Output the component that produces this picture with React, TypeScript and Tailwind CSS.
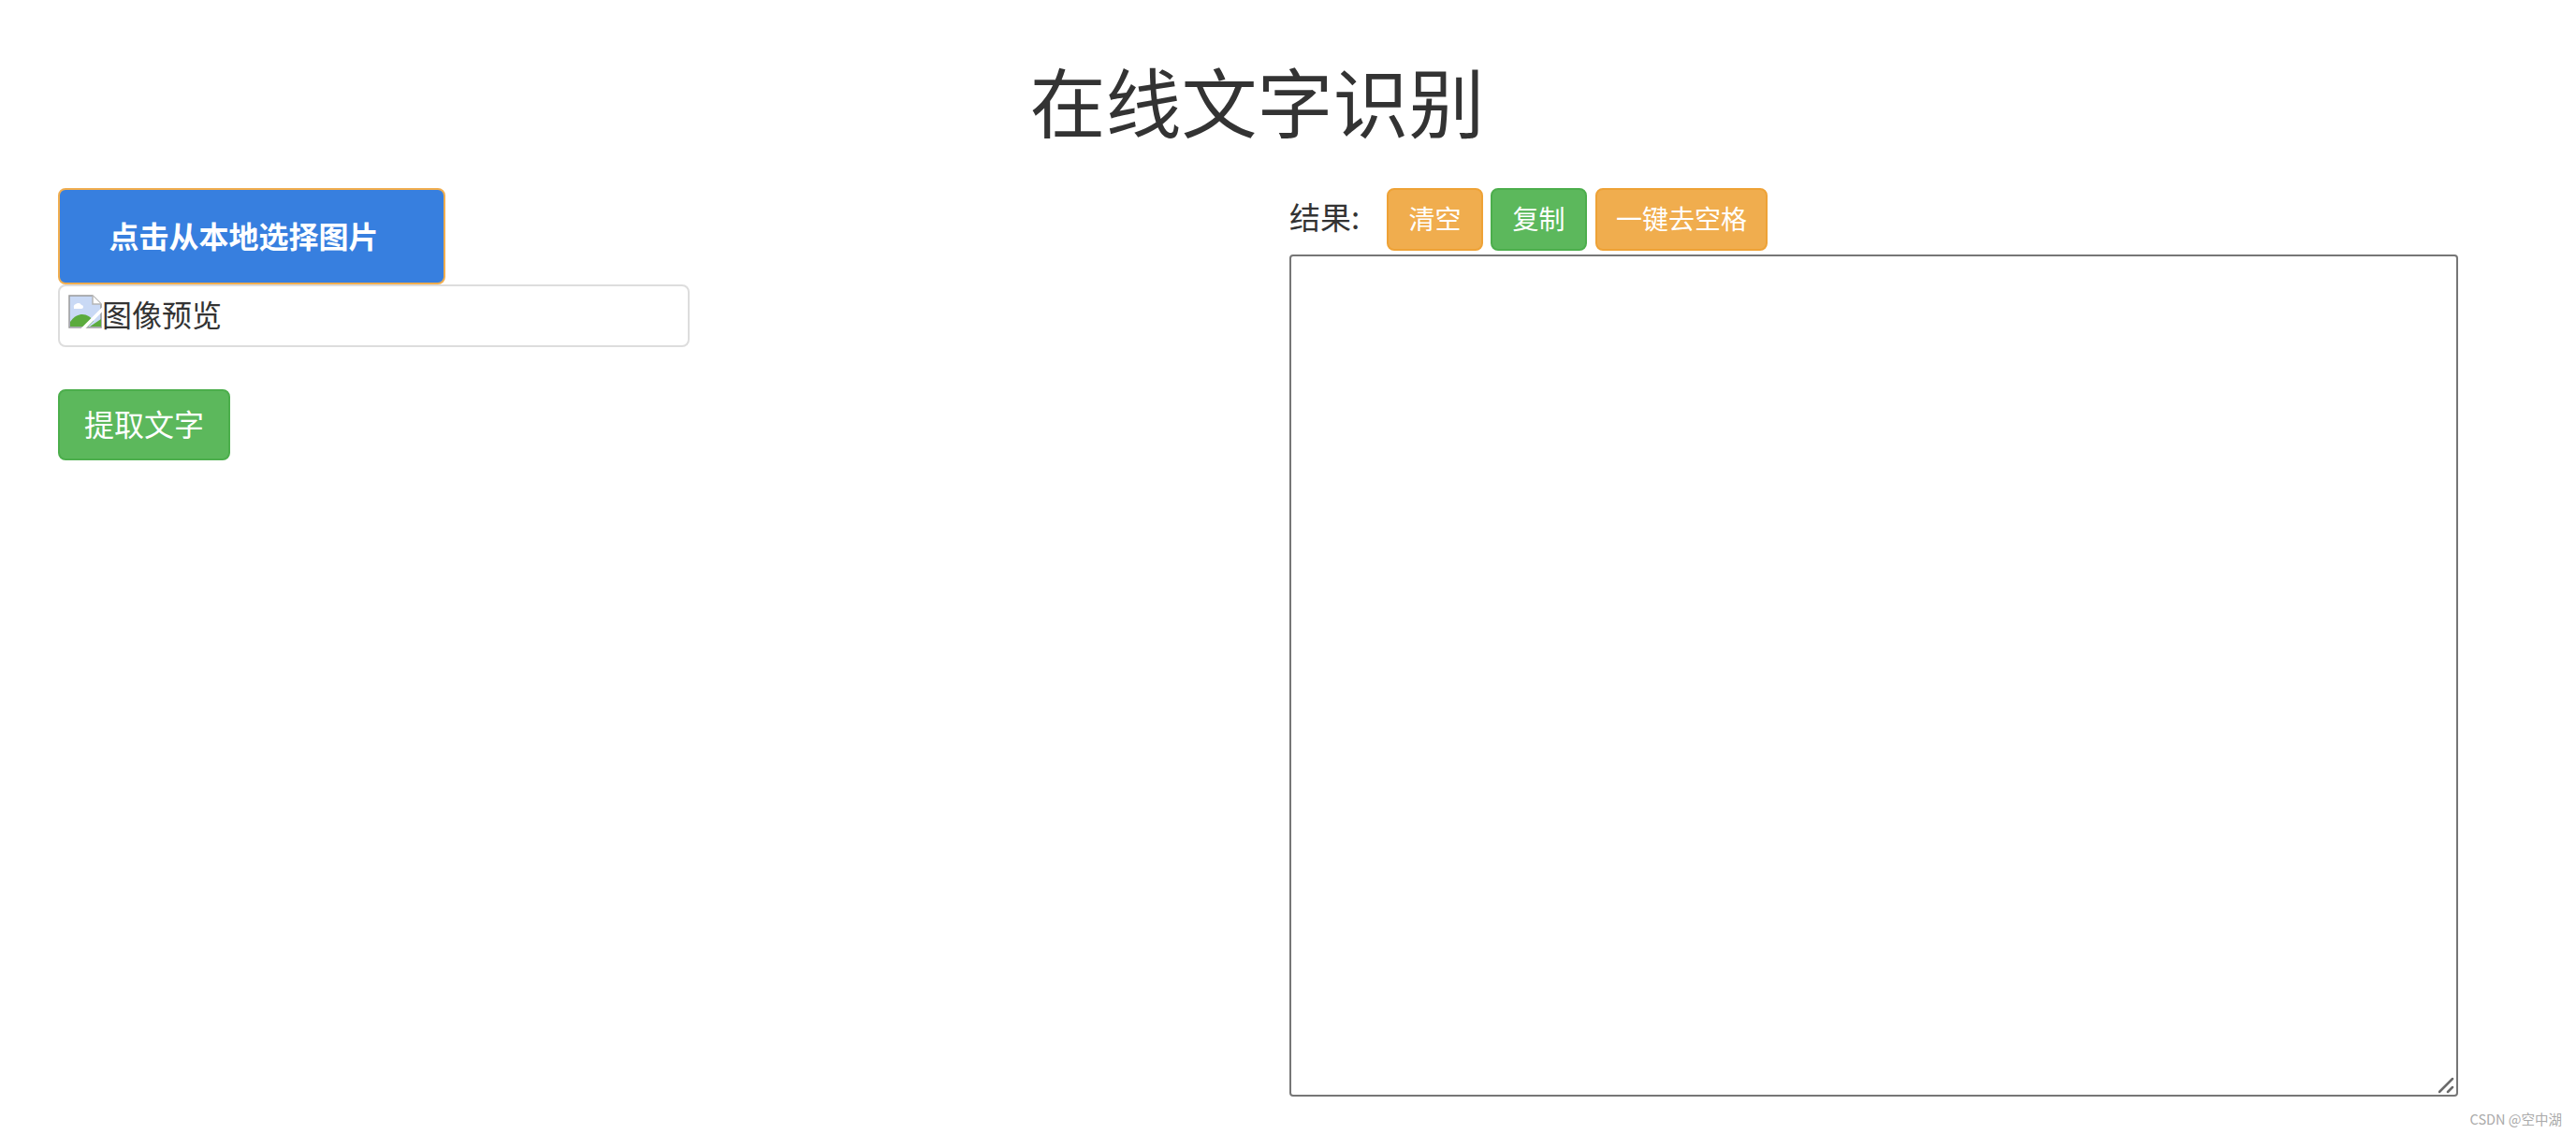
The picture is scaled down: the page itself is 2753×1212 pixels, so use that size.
const cjk = 'font-["Noto_Sans_CJK_SC","Noto_Sans",sans-serif]'

function BrokenImageIcon() {
  return (
    <svg width="36" height="36" viewBox="0 0 36 36" className="shrink-0">
      <path d="M1 1H26L35 10V35H1Z" fill="#c9d9f5" stroke="#9a9a9a" strokeWidth="1.5" />
      <path d="M26 1V10H35" fill="#fff" stroke="#b5b5b5" strokeWidth="1.5" />
      <path d="M6 14a3 3 0 0 1 2-4a4 4 0 0 1 6 1a2 2 0 0 1 0 4H6Z" fill="#fff" />
      <path d="M2 34V29C6 23 11 21 15 21C20 21 24 24 27 28L21 34Z" fill="#5bab3d" />
      <path d="M23 34L35 26V34Z" fill="#5bab3d" />
      <path d="M15 37L37 15" stroke="#fff" strokeWidth="3.5" />
    </svg>
  )
}

function ResizeGrip() {
  return (
    <svg width="18" height="18" viewBox="0 0 18 18" className="absolute right-[3px] bottom-[3px]">
      <path d="M1 16L15 2M10 16L15 11" stroke="#6b6b6b" strokeWidth="2.5" strokeLinecap="round" />
    </svg>
  )
}

export default function App() {
  return (
    <div className={`relative h-screen w-full overflow-hidden bg-white text-[#333] ${cjk}`}>
      <h1 className="h-[201px] pt-[54px] pr-[66px] text-center text-[81px] leading-[104px] text-[#333]">在线文字识别</h1>

      <div className="flex items-start pl-[62px]">
        {/* left column */}
        <div className="flex w-[1316px] flex-col items-start">
          <button className="h-[103px] w-[414px] rounded-lg border-2 border-[#f0ad4e] bg-[#377fdf] pr-[17px] pb-[4px] text-[32px] font-bold text-white">
            点击从本地选择图片
          </button>
          <div className="flex h-[67px] w-[675px] items-start rounded-lg border-2 border-[#ddd] pl-[9px] pt-[9px]">
            <BrokenImageIcon />
            <span className="text-[32px] leading-[40px] text-[#333]">图像预览</span>
          </div>
          <button className="mt-[45px] h-[76px] w-[184px] rounded-lg border-2 border-[#4cae4c] bg-[#5cb85c] pb-[4px] text-[32px] text-white">
            提取文字
          </button>
        </div>

        {/* right column */}
        <div className="flex w-[1249px] flex-col">
          <div className="flex h-[67px] items-center">
            <span className="w-[104px] pb-[5px] text-[33px] text-[#333]">结果:</span>
            <div className="flex gap-2">
              <button className="h-[67px] w-[103px] rounded-lg border-2 border-[#eea236] bg-[#f0ad4e] pb-[4px] text-[28px] text-white">清空</button>
              <button className="h-[67px] w-[103px] rounded-lg border-2 border-[#4cae4c] bg-[#5cb85c] pb-[4px] text-[28px] text-white">复制</button>
              <button className="ml-px h-[67px] w-[184px] rounded-lg border-2 border-[#eea236] bg-[#f0ad4e] pb-[4px] text-[28px] text-white">一键去空格</button>
            </div>
          </div>
          <div className="relative mt-[4px] h-[900px]">
            <textarea className="block h-full w-full resize-none rounded border-2 border-[#767676] bg-white" />
            <ResizeGrip />
          </div>
        </div>
      </div>

      <span className="absolute right-[15px] bottom-[6px] text-[14.5px] leading-5 text-[#aaa]">CSDN @空中湖</span>
    </div>
  )
}
